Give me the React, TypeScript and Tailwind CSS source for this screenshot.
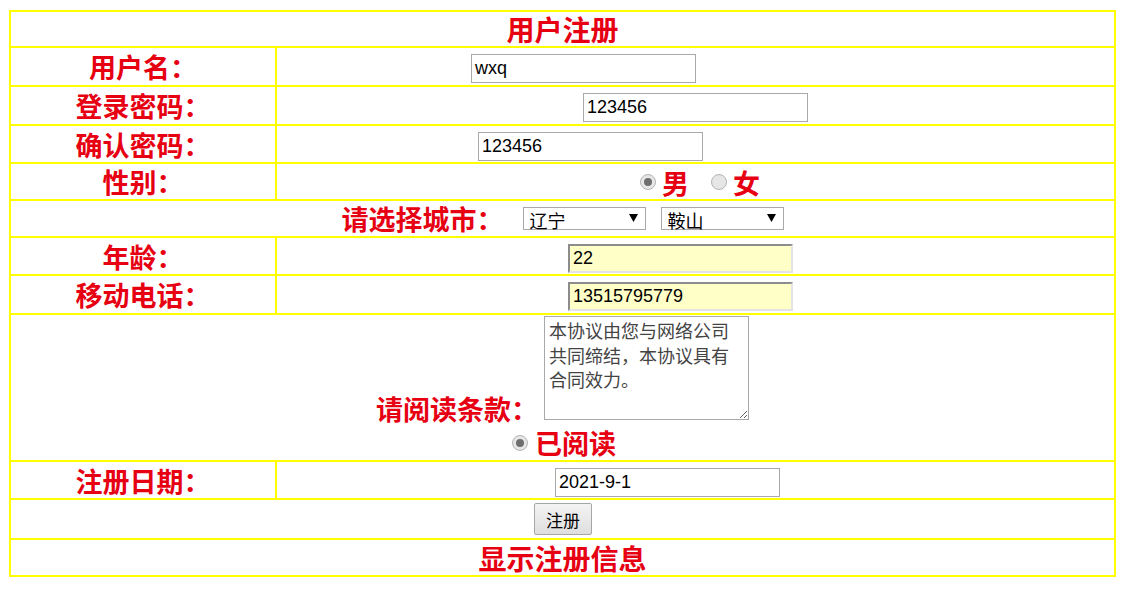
import React from 'react';

const label = "font-['Noto_Sans_CJK_SC',sans-serif] font-bold text-[27px] leading-none text-[#e60012]";
const field = "font-['Liberation_Sans',Arial,sans-serif] text-[18px] text-black";

function TextBox({ value, offset, highlight }: { value: string; offset: string; highlight?: boolean }) {
  return (
    <div className={`flex h-full items-start pt-[6px] ${offset}`}>
      <div
        className={`flex h-[29px] w-[225px] items-center px-[3px] ${field} ${
          highlight
            ? 'border-2 border-t-[#8c8c8c] border-l-[#8c8c8c] border-r-[#e4e4e4] border-b-[#e4e4e4] bg-[#ffffc8]'
            : 'border border-[#a9a9a9] bg-white'
        }`}
      >
        {value}
      </div>
    </div>
  );
}

function Radio({ checked }: { checked?: boolean }) {
  return (
    <span className="flex h-[16px] w-[16px] items-center justify-center rounded-full border border-[#b4b4b4] bg-[#e6e6e6]">
      {checked && <span className="h-[8px] w-[8px] rounded-full bg-[#6e6e6e]" />}
    </span>
  );
}

function Select({ value }: { value: string }) {
  return (
    <div className="flex h-[23px] w-[123px] items-center justify-between border border-[#a9a9a9] bg-white pl-[6px] pr-[7px]">
      <span className="pt-[3px] font-['Noto_Sans_CJK_SC',sans-serif] text-[18px] leading-[18px] text-black">{value}</span>
      <svg width="9" height="8" viewBox="0 0 9 8" className="mb-[2px]">
        <path d="M0 0H9L4.5 8Z" fill="#000" />
      </svg>
    </div>
  );
}

function Row({ name, height, children }: { name: string; height: string; children: React.ReactNode }) {
  return (
    <div className={`flex border-t-2 border-[#ffff00] ${height}`}>
      <div className={`flex w-[264px] shrink-0 items-center justify-center ${label}`}>{name}</div>
      <div className="flex-1 border-l-2 border-[#ffff00]">{children}</div>
    </div>
  );
}

export default function App() {
  return (
    <div className="min-h-screen bg-white pt-[10px] pl-[9px]">
      <div className="w-[1107px] border-2 border-[#ffff00]">
        {/* title */}
        <div className={`flex h-[34px] items-center justify-center text-[28px] ${label}`}>用户注册</div>

        <Row name="用户名：" height="h-[39px]">
          <TextBox value="wxq" offset="pl-[194px]" />
        </Row>
        <Row name="登录密码：" height="h-[39px]">
          <TextBox value="123456" offset="pl-[306px]" />
        </Row>
        <Row name="确认密码：" height="h-[38px]">
          <TextBox value="123456" offset="pl-[201px]" />
        </Row>
        <Row name="性别：" height="h-[37px]">
          <div className="flex h-full items-center pl-[363px] pt-[1px]">
            <Radio checked />
            <span className={`ml-[6px] ${label}`}>男</span>
            <span className="ml-[22px]">
              <Radio />
            </span>
            <span className={`ml-[6px] ${label}`}>女</span>
          </div>
        </Row>

        {/* city */}
        <div className="flex h-[37px] items-center justify-center border-t-2 border-[#ffff00]">
          <span className={label}>请选择城市：</span>
          <div className="ml-[19px]">
            <Select value="辽宁" />
          </div>
          <div className="ml-[15px]">
            <Select value="鞍山" />
          </div>
        </div>

        <Row name="年龄：" height="h-[38px]">
          <TextBox value="22" offset="pl-[291px]" highlight />
        </Row>
        <Row name="移动电话：" height="h-[39px]">
          <TextBox value="13515795779" offset="pl-[291px]" highlight />
        </Row>

        {/* terms */}
        <div className="flex h-[147px] flex-col items-center border-t-2 border-[#ffff00] pt-px">
          <div className="flex items-end">
            <span className={`mb-[-2px] ${label}`}>请阅读条款：</span>
            <textarea
              readOnly
              defaultValue="本协议由您与网络公司共同缔结，本协议具有合同效力。"
              className="ml-[6px] h-[104px] w-[205px] border border-[#a9a9a9] bg-white px-[4px] py-[1px] font-['Noto_Sans_CJK_SC',sans-serif] text-[18px] leading-[24.5px] text-[#444] outline-none"
            />
          </div>
          <div className="mt-[9px] ml-[3px] flex items-center">
            <Radio checked />
            <span className={`ml-[7px] ${label}`}>已阅读</span>
          </div>
        </div>

        <Row name="注册日期：" height="h-[38px]">
          <TextBox value="2021-9-1" offset="pl-[278px]" />
        </Row>

        {/* submit */}
        <div className="flex h-[40px] items-center justify-center border-t-2 border-[#ffff00] pl-[1px]">
          <button className="h-[32px] w-[58px] rounded-[2px] border border-[#a6a6a6] bg-gradient-to-b from-[#f4f4f4] to-[#dedede] font-['Noto_Sans_CJK_SC',sans-serif] text-[17px] leading-none text-black">
            注册
          </button>
        </div>

        <div className={`flex h-[37px] items-center justify-center border-t-2 border-[#ffff00] text-[28px] ${label}`}>
          显示注册信息
        </div>
      </div>
    </div>
  );
}
